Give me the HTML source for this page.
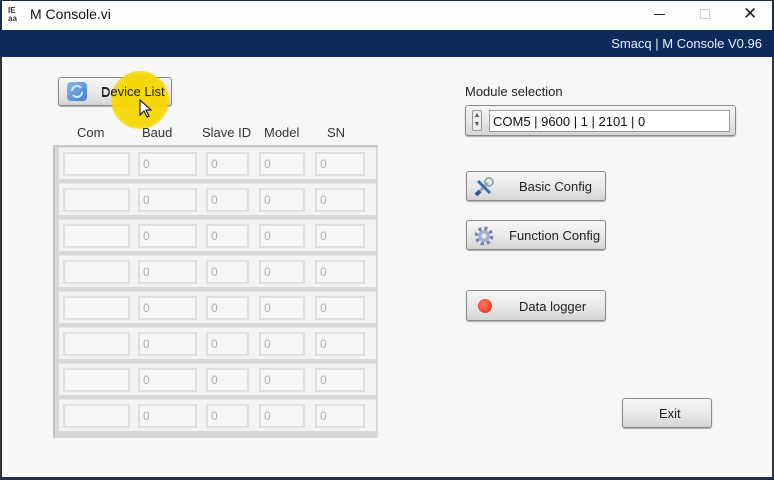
<!DOCTYPE html>
<html><head><meta charset="utf-8">
<style>
*{margin:0;padding:0;box-sizing:border-box}
body{width:774px;height:480px;overflow:hidden;background:#f7f7f7;font-family:"Liberation Sans","DejaVu Sans",sans-serif;position:relative;font-size:13px;color:#222}
.a{position:absolute}
.title{left:0;top:0;width:774px;height:30px;background:#fff;border-left:2px solid #1a2a50;border-right:2px solid #1a2a50;border-top:1px solid #1a2a50}
.blue{left:0;top:30px;width:774px;height:27px;background:#0c2a5a;color:#e8eef8;font-size:13px}
.btn{border:1px solid #8a8a8a;border-radius:3px;background:linear-gradient(#f6f6f6,#e6e6e6 60%,#d4d4d4);box-shadow:0 1px 1px #aaa;font-size:13px;color:#222}
.frame{left:53px;top:145px;width:325px;height:293px;background:#d8d8d8;border-left:2px solid #c4c4c4;border-top:2px solid #c8c8c8}
.row{position:absolute;left:4px;width:317px;height:32px;background:#f3f3f3;border-top:1px solid #e4e4e4}
.cell{position:absolute;top:4px;height:24px;background:#f6f6f6;border:2px solid #dedede;color:#b0b0b0;font-size:12px;padding-left:3px;line-height:20px}
.hdr{top:125px;font-size:13px;color:#333}
</style></head><body>
<div class="a title">
 <div class="a" style="left:6px;top:6px;font-size:8px;line-height:8px;font-weight:bold;color:#333">IE<br>aa</div>
 <div class="a" style="left:28px;top:5px;font-size:14px;color:#111">M Console.vi</div>
 <div class="a" style="left:652px;top:13px;width:11px;height:1px;background:#222"></div>
 <div class="a" style="left:698px;top:8px;width:10px;height:10px;border:1px solid #ccc"></div>
 <div class="a" style="left:741px;top:3px;font-size:17px;color:#222">✕</div>
</div>
<div class="a blue"><div class="a" style="right:12px;top:6px">Smacq | M Console V0.96</div></div>
<div class="a" style="left:0;top:57px;width:2px;height:423px;background:#333"></div>
<div class="a" style="left:772px;top:57px;width:2px;height:423px;background:#333"></div>
<div class="a" style="left:0;top:477px;width:774px;height:3px;background:#1e3050"></div>

<div class="a btn" style="left:58px;top:77px;width:114px;height:29px">
 <div class="a" style="left:8px;top:4px;width:20px;height:19px;border-radius:4px;background:linear-gradient(135deg,#8ab8e8,#3d7fc8)"></div>
 <svg class="a" style="left:10px;top:6px" width="16" height="15"><path d="M3 7a5 5 0 0 1 9-3M13 8a5 5 0 0 1-9 3" stroke="#d8ecff" stroke-width="2" fill="none"/></svg>
 <div class="a" style="left:42px;top:7px">Device List</div>
</div>
<div class="a" style="left:111px;top:71px;width:58px;height:58px;border-radius:50%;background:radial-gradient(circle,rgba(245,215,0,.95) 60%,rgba(245,215,0,0.5) 85%,rgba(245,215,0,0) 100%)"></div>
<div class="a" style="left:42px;top:7px"></div>
<div class="a" style="left:158px;top:84px;font-size:13px;color:#222;left:101px;top:84px;">Device List</div>
<svg class="a" style="left:139px;top:99px" width="14" height="20"><path d="M1 1v15l4-4 3 6 2-1-3-6h5z" fill="#fff" stroke="#000" stroke-width="1"/></svg>

<div class="a hdr" style="left:77px">Com</div>
<div class="a hdr" style="left:142px">Baud</div>
<div class="a hdr" style="left:202px">Slave ID</div>
<div class="a hdr" style="left:264px">Model</div>
<div class="a hdr" style="left:327px">SN</div>

<div class="a frame">
 <div class="row" style="top:0"><div class="cell" style="left:4px;width:67px"></div><div class="cell" style="left:79px;width:59px">0</div><div class="cell" style="left:147px;width:43px">0</div><div class="cell" style="left:200px;width:46px">0</div><div class="cell" style="left:256px;width:50px">0</div></div>
 <div class="row" style="top:36px"><div class="cell" style="left:4px;width:67px"></div><div class="cell" style="left:79px;width:59px">0</div><div class="cell" style="left:147px;width:43px">0</div><div class="cell" style="left:200px;width:46px">0</div><div class="cell" style="left:256px;width:50px">0</div></div>
 <div class="row" style="top:72px"><div class="cell" style="left:4px;width:67px"></div><div class="cell" style="left:79px;width:59px">0</div><div class="cell" style="left:147px;width:43px">0</div><div class="cell" style="left:200px;width:46px">0</div><div class="cell" style="left:256px;width:50px">0</div></div>
 <div class="row" style="top:108px"><div class="cell" style="left:4px;width:67px"></div><div class="cell" style="left:79px;width:59px">0</div><div class="cell" style="left:147px;width:43px">0</div><div class="cell" style="left:200px;width:46px">0</div><div class="cell" style="left:256px;width:50px">0</div></div>
 <div class="row" style="top:144px"><div class="cell" style="left:4px;width:67px"></div><div class="cell" style="left:79px;width:59px">0</div><div class="cell" style="left:147px;width:43px">0</div><div class="cell" style="left:200px;width:46px">0</div><div class="cell" style="left:256px;width:50px">0</div></div>
 <div class="row" style="top:180px"><div class="cell" style="left:4px;width:67px"></div><div class="cell" style="left:79px;width:59px">0</div><div class="cell" style="left:147px;width:43px">0</div><div class="cell" style="left:200px;width:46px">0</div><div class="cell" style="left:256px;width:50px">0</div></div>
 <div class="row" style="top:216px"><div class="cell" style="left:4px;width:67px"></div><div class="cell" style="left:79px;width:59px">0</div><div class="cell" style="left:147px;width:43px">0</div><div class="cell" style="left:200px;width:46px">0</div><div class="cell" style="left:256px;width:50px">0</div></div>
 <div class="row" style="top:252px"><div class="cell" style="left:4px;width:67px"></div><div class="cell" style="left:79px;width:59px">0</div><div class="cell" style="left:147px;width:43px">0</div><div class="cell" style="left:200px;width:46px">0</div><div class="cell" style="left:256px;width:50px">0</div></div>
</div>

<div class="a" style="left:465px;top:84px;font-size:13px;color:#222">Module selection</div>
<div class="a btn" style="left:465px;top:105px;width:271px;height:31px">
 <div class="a" style="left:6px;top:4px;width:10px;height:21px;border:1px solid #999;border-radius:2px;background:#eee;font-size:7px;line-height:9px;text-align:center;color:#555">▲<br>▼</div>
 <div class="a" style="left:23px;top:4px;width:241px;height:22px;background:#fff;border:1px solid #999;padding:3px 0 0 3px;font-size:13px;color:#111">COM5 | 9600 | 1 | 2101 | 0</div>
</div>

<div class="a btn" style="left:466px;top:171px;width:140px;height:30px">
 <svg class="a" style="left:6px;top:4px" width="22" height="22"><path d="M4 18L15 7" stroke="#9aa" stroke-width="3"/><circle cx="16" cy="6" r="4" fill="none" stroke="#9aa" stroke-width="2"/><path d="M5 5L17 17" stroke="#3a6ea8" stroke-width="3"/><path d="M3 19l4-4" stroke="#2a5a98" stroke-width="4"/></svg>
 <div class="a" style="left:52px;top:7px">Basic Config</div>
</div>
<div class="a btn" style="left:466px;top:220px;width:140px;height:30px">
 <svg class="a" style="left:5px;top:3px" width="24" height="24"><circle cx="12" cy="12" r="7.5" fill="none" stroke="#7a88b0" stroke-width="4" stroke-dasharray="3 2.9"/><circle cx="12" cy="12" r="6" fill="#a4b0d0"/><circle cx="12" cy="12" r="2.5" fill="#e8ecf4"/></svg>
 <div class="a" style="left:42px;top:7px">Function Config</div>
</div>
<div class="a btn" style="left:466px;top:290px;width:140px;height:31px">
 <div class="a" style="left:11px;top:8px;width:14px;height:14px;border-radius:50%;background:radial-gradient(circle at 40% 40%,#ff7a5a,#e8281a)"></div>
 <div class="a" style="left:52px;top:8px">Data logger</div>
</div>
<div class="a btn" style="left:622px;top:398px;width:90px;height:30px">
 <div class="a" style="left:36px;top:7px">Exit</div>
</div>
</body></html>
